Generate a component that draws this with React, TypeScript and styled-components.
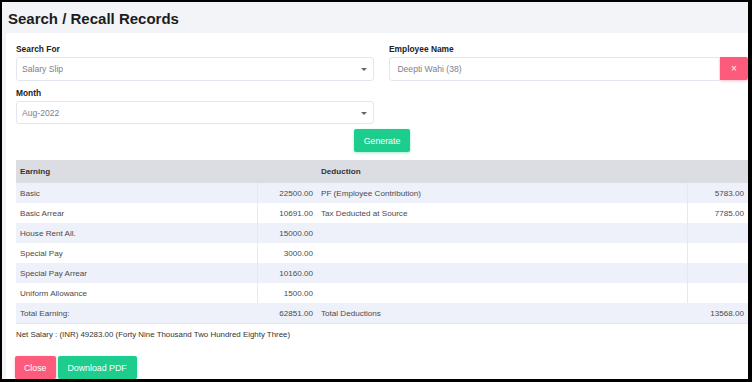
import styled, { createGlobalStyle } from "styled-components";

const GlobalStyle = createGlobalStyle`
  html, body {
    margin: 0;
    padding: 0;
    background: #000;
  }
  body {
    font-family: "Liberation Sans", Arial, sans-serif;
  }
`;

const Frame = styled.div`
  margin: 2px 4px 0 2px;
  height: 377px;
  background: #f3f4f8;
  display: flex;
  flex-direction: column;
  overflow: hidden;
`;

const TitleBar = styled.div`
  height: 31px;
  padding: 1px 0 0 6px;
  display: flex;
  align-items: center;
`;

const Title = styled.h1`
  margin: 0;
  font-size: 15px;
  font-weight: 700;
  color: #1c1c1c;
`;

const Card = styled.div`
  flex: 1;
  margin-left: 4px;
  background: #fff;
  padding: 11px 0 0 10px;
`;

const FormGrid = styled.div`
  display: grid;
  grid-template-columns: 358px 1fr;
  column-gap: 15px;
  row-gap: 7px;
`;

const Field = styled.div`
  display: flex;
  flex-direction: column;
`;

const Label = styled.label`
  font-size: 8.4px;
  font-weight: 700;
  color: #222;
  line-height: 11px;
  margin-bottom: 2px;
`;

const Control = styled.div<{ $h?: number; $joined?: boolean }>`
  position: relative;
  height: ${(p) => p.$h ?? 24}px;
  box-sizing: border-box;
  border: 1px solid #e3e6ee;
  border-radius: ${(p) => (p.$joined ? "3px 0 0 3px" : "3px")};
  display: flex;
  align-items: center;
  padding: 0 5px;
  font-size: 8.6px;
  color: #7d7f8c;
  flex: ${(p) => (p.$joined ? "1" : "none")};
`;

const Caret = styled.span`
  position: absolute;
  right: 6px;
  top: 50%;
  margin-top: -1px;
  border-left: 3px solid transparent;
  border-right: 3px solid transparent;
  border-top: 3px solid #666;
`;

const InputGroup = styled.div`
  display: flex;
  height: 24px;
`;

const ClearButton = styled.button`
  width: 28px;
  height: 23px;
  border: none;
  border-radius: 0 2px 2px 0;
  background: #fd5b7b;
  color: #fff;
  font-size: 10px;
  font-family: inherit;
  padding: 0;
  box-shadow: 0 1px 3px rgba(253, 91, 123, 0.4);
`;

const Center = styled.div`
  display: flex;
  justify-content: center;
  margin-top: 5px;
`;

const Button = styled.button<{ $variant: "green" | "red" }>`
  height: 23px;
  border: none;
  border-radius: 2px;
  padding: 0 ${(p) => (p.$variant === "red" ? 9 : 10)}px;
  font-family: inherit;
  font-size: 8.8px;
  color: #fff;
  background: ${(p) => (p.$variant === "green" ? "#1ccd8e" : "#fd5b7b")};
  box-shadow: 0 1px 3px
    ${(p) => (p.$variant === "green" ? "rgba(28,205,142,0.4)" : "rgba(253,91,123,0.4)")};
`;

const Table = styled.table`
  margin-top: 8px;
  width: 732px;
  border-collapse: collapse;
  table-layout: fixed;
  font-size: 8.1px;
  color: #4a4a4a;
  border-bottom: 1px solid #e5e7ec;
`;

const Th = styled.th`
  height: 23px;
  background: #dcdde2;
  text-align: left;
  padding: 0 4px;
  font-weight: 700;
  color: #333;
`;

const Tr = styled.tr<{ $striped: boolean }>`
  background: ${(p) => (p.$striped ? "#eef1f9" : "#fff")};
`;

const Td = styled.td<{ $amount?: boolean; $divider?: boolean }>`
  height: 20px;
  padding: 0 4px;
  text-align: ${(p) => (p.$amount ? "right" : "left")};
  border-left: ${(p) => (p.$divider ? "1px solid #e6e8ec" : "none")};
`;

const NetSalary = styled.p`
  margin: 5px 0 0;
  font-size: 7.9px;
  color: #333;
  line-height: 12px;
`;

const Actions = styled.div`
  display: flex;
  gap: 2px;
  margin-top: 15px;
  margin-left: -1px;
`;

const earnings = [
  ["Basic", "22500.00"],
  ["Basic Arrear", "10691.00"],
  ["House Rent All.", "15000.00"],
  ["Special Pay", "3000.00"],
  ["Special Pay Arrear", "10160.00"],
  ["Uniform Allowance", "1500.00"],
];

const deductions = [
  ["PF (Employee Contribution)", "5783.00"],
  ["Tax Deducted at Source", "7785.00"],
];

export default function App() {
  return (
    <>
      <GlobalStyle />
      <Frame>
        <TitleBar>
          <Title>Search / Recall Records</Title>
        </TitleBar>
        <Card>
          <FormGrid>
            <Field>
              <Label>Search For</Label>
              <Control>
                Salary Slip
                <Caret />
              </Control>
            </Field>
            <Field>
              <Label>Employee Name</Label>
              <InputGroup>
                <Control $joined>&nbsp;Deepti Wahi (38)</Control>
                <ClearButton>×</ClearButton>
              </InputGroup>
            </Field>
            <Field>
              <Label>Month</Label>
              <Control $h={23}>
                Aug-2022
                <Caret />
              </Control>
            </Field>
          </FormGrid>
          <Center>
            <Button $variant="green">Generate</Button>
          </Center>
          <Table>
            <colgroup>
              <col style={{ width: 241 }} />
              <col style={{ width: 60 }} />
              <col style={{ width: 370 }} />
              <col style={{ width: 61 }} />
            </colgroup>
            <thead>
              <tr>
                <Th colSpan={2}>Earning</Th>
                <Th colSpan={2}>Deduction</Th>
              </tr>
            </thead>
            <tbody>
              {earnings.map(([name, amt], i) => (
                <Tr key={name} $striped={i % 2 === 0}>
                  <Td>{name}</Td>
                  <Td $amount $divider>
                    {amt}
                  </Td>
                  <Td>{deductions[i]?.[0] ?? ""}</Td>
                  <Td $amount $divider>
                    {deductions[i]?.[1] ?? ""}
                  </Td>
                </Tr>
              ))}
              <Tr $striped>
                <Td>Total Earning:</Td>
                <Td $amount>62851.00</Td>
                <Td>Total Deductions</Td>
                <Td $amount>13568.00</Td>
              </Tr>
            </tbody>
          </Table>
          <NetSalary>
            Net Salary : (INR) 49283.00 (Forty Nine Thousand Two Hundred Eighty Three)
          </NetSalary>
          <Actions>
            <Button $variant="red">Close</Button>
            <Button $variant="green">Download PDF</Button>
          </Actions>
        </Card>
      </Frame>
    </>
  );
}
